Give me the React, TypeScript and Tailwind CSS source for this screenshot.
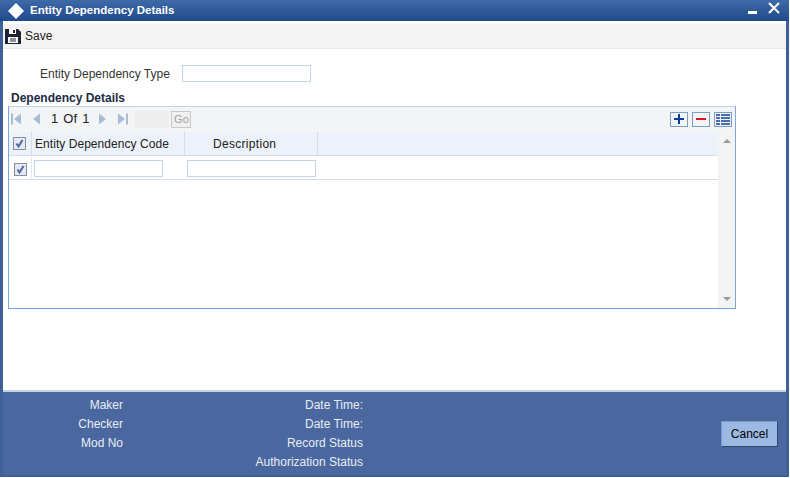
const font = "font-['Liberation_Sans',Arial,sans-serif]";

function Pager({ d }: { d: string }) {
  return (
    <svg width="10" height="12" viewBox="0 0 10 12" className="text-[#a9bcd6]">
      <path d={d} fill="currentColor" />
    </svg>
  );
}

function Check() {
  return (
    <span className="flex h-[13px] w-[13px] items-center justify-center border border-[#8a8f99] bg-[#e3e8f2]">
      <svg width="11" height="11" viewBox="0 0 11 11">
        <path d="M2.5 5.5 L4.5 8.5 L8.5 2" fill="none" stroke="#4a66a4" strokeWidth="2" />
      </svg>
    </span>
  );
}

function ToolButton({ children }: { children: React.ReactNode }) {
  return (
    <span className="flex h-[15px] w-[18px] items-center justify-center border border-[#7f9dbf] bg-[#f2f4f8]">
      {children}
    </span>
  );
}

const audit = [
  ["Maker", "Date Time:"],
  ["Checker", "Date Time:"],
  ["Mod No", "Record Status"],
  ["", "Authorization Status"],
];

export default function App() {
  return (
    <div className={`h-[478px] w-[790px] bg-white text-[12px] text-[#222] ${font}`}>
      <div className="flex h-[477px] w-[789px] flex-col border-x-[3px] border-b-[2px] border-[#3e5f97] bg-white">
        {/* title bar */}
        <div className="-mx-[3px] flex h-[21px] shrink-0 items-center bg-gradient-to-b from-[#3f6aa8] to-[#1f4a8c]">
          <svg width="18" height="18" viewBox="0 0 18 18" className="ml-[7px]">
            <path d="M9 1 L17 9 L9 17 L1 9 Z" fill="#fff" />
          </svg>
          <span className="ml-[5px] text-[11.5px] font-bold text-white">Entity Dependency Details</span>
          <div className="ml-auto flex items-center gap-[11px] pr-[9px]">
            <span className="mt-[4px] h-[3px] w-[9px] bg-white" />
            <svg width="12" height="12" viewBox="0 0 12 12" className="-mt-[6px]">
              <path d="M1 1 L11 11 M11 1 L1 11" stroke="#fff" strokeWidth="2" />
            </svg>
          </div>
        </div>

        {/* toolbar */}
        <div className="mt-[3px] flex h-[25px] shrink-0 items-center gap-[4px] border-b border-[#e8e8e8] bg-[#f3f3f3] pl-[2px]">
          <svg width="16" height="16" viewBox="0 0 16 16">
            <path d="M0 1 H13 L16 4 V16 H0 Z" fill="#1c2433" />
            <rect x="4" y="1" width="7" height="5" fill="#fff" />
            <rect x="8" y="2" width="2" height="3" fill="#1c2433" />
            <rect x="3" y="9" width="10" height="6" fill="#fff" />
            <path d="M5 11 H11 M5 13 H11" stroke="#1c2433" />
          </svg>
          <span>Save</span>
        </div>

        {/* form */}
        <div className="flex min-h-0 flex-1 flex-col">
          <div className="mt-[16px] flex items-center pl-[37px]">
            <span className="w-[142px] text-[#333]">Entity Dependency Type</span>
            <span className="-mt-[1px] mb-[1px] h-[17px] w-[129px] border border-[#c6d3e6] bg-white" />
          </div>
          <div className="mt-[8px] pl-[8px] font-bold leading-[14px] text-[#1c2a44]">Dependency Details</div>

          <div className="ml-[5px] mt-[1px] flex h-[203px] w-[728px] flex-col border border-[#c4d2e6] border-x-[#7ca7dc] border-b-[#6fa0dc]">
            {/* pager row */}
            <div className="flex h-[25px] shrink-0 items-center bg-[#f3f4f6] pb-[1px] pl-[2px]">
              <Pager d="M0 0.5 H2 V11.5 H0 Z M10 0.5 V11.5 L3 6 Z" />
              <span className="ml-[11px]">
                <Pager d="M8 0.5 V11.5 L1 6 Z" />
              </span>
              <span className="ml-[9px] text-[13px] text-[#222] [word-spacing:1.5px]">1 Of 1</span>
              <span className="ml-[8px]">
                <Pager d="M2 0.5 V11.5 L9 6 Z" />
              </span>
              <span className="ml-[11px]">
                <Pager d="M0 0.5 V11.5 L7 6 Z M8 0.5 H10 V11.5 H8 Z" />
              </span>
              <span className="ml-[7px] h-[17px] w-[34px] bg-[#eeeeee]" />
              <span className="ml-[2px] flex h-[17px] w-[20px] items-center justify-center border border-[#c8c8c8] bg-[#f0f0f0] text-[11px] text-[#a0a0a0]">
                Go
              </span>
              <div className="ml-auto flex items-center gap-[4px] pr-[3px]">
                <ToolButton>
                  <svg width="12" height="12" viewBox="0 0 12 12">
                    <path d="M6 1 V11 M1 6 H11" stroke="#0c3c9c" strokeWidth="2" />
                  </svg>
                </ToolButton>
                <ToolButton>
                  <span className="h-[2px] w-[10px] bg-[#e4121c]" />
                </ToolButton>
                <ToolButton>
                  <svg width="14" height="11" viewBox="0 0 14 11">
                    <path d="M0 1 H14 M0 4 H14 M0 7 H14 M0 10 H14" stroke="#123f95" strokeWidth="1.4" />
                    <path d="M4.5 0 V11" stroke="#f2f4f8" />
                  </svg>
                </ToolButton>
              </div>
            </div>

            {/* grid */}
            <div className="flex min-h-0 flex-1">
              <div className="flex min-w-0 flex-1 flex-col">
                <div className="flex h-[23px] shrink-0 items-center bg-[#edf1fa]">
                  <span className="flex h-full w-[23px] items-center justify-center border-r border-[#d6dbe5] pr-[2px]">
                    <Check />
                  </span>
                  <span className="flex h-full w-[153px] items-center border-r border-[#d6dbe5] pl-[3px] tracking-[0.05px]">
                    Entity Dependency Code
                  </span>
                  <span className="flex h-full w-[133px] items-center border-r border-[#d6dbe5] pl-[28px] tracking-[0.3px]">
                    Description
                  </span>
                </div>
                <div className="flex h-[25px] shrink-0 items-center border-y border-[#d5e0ee] pt-[1px]">
                  <span className="flex h-full w-[23px] items-center justify-center border-r border-[#e2e6ee] pt-[2px]">
                    <Check />
                  </span>
                  <span className="ml-[2px] h-[17px] w-[129px] border border-[#c6d3e6]" />
                  <span className="ml-[24px] h-[17px] w-[129px] border border-[#c6d3e6]" />
                </div>
              </div>
              {/* scrollbar */}
              <div className="flex w-[17px] shrink-0 flex-col items-center justify-between bg-[#f3f3f3] py-[7px]">
                <span className="h-0 w-0 border-x-[4px] border-b-[4px] border-x-transparent border-b-[#999]" />
                <span className="h-0 w-0 border-x-[4px] border-t-[4px] border-x-transparent border-t-[#999]" />
              </div>
            </div>
          </div>
        </div>

        {/* audit footer */}
        <div className="flex h-[85px] shrink-0 border-t-2 border-[#c5cfe0] bg-[#4a689f] pt-[4px] text-[#e8edf5]">
          <div className="w-[120px] shrink-0 text-right">
            {audit.map(([l], i) => (
              <div key={i} className="h-[19px] leading-[19px]">{l}</div>
            ))}
          </div>
          <div className="w-[240px] shrink-0 text-right">
            {audit.map(([, r], i) => (
              <div key={i} className="h-[19px] leading-[19px]">{r}</div>
            ))}
          </div>
          <button className="ml-auto mr-[8px] mt-[25px] h-[26px] w-[57px] border border-[#30486f] border-l-[#7c9ac9] border-t-[#7c9ac9] bg-[#9cb9e3] text-[12px] text-black">
            Cancel
          </button>
        </div>
      </div>
    </div>
  );
}
